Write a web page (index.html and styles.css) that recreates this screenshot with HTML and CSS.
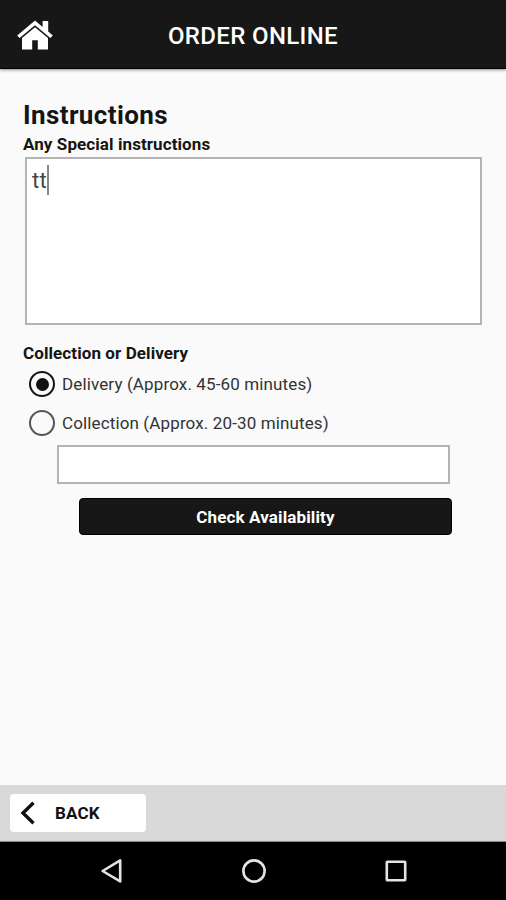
FILE: index.html
```html
<!DOCTYPE html>
<html lang="en">
<head>
<meta charset="utf-8">
<title>Order Online</title>
<link rel="stylesheet" href="styles.css">
</head>
<body>
<div class="app">
  <header class="topbar">
    <svg class="home" viewBox="0 0 38 32" width="38" height="32">
      <path d="M19 1.5L1.2 16.4l2.4 2.7L19 6.3l15.4 12.8 2.4-2.7-4.6-3.9V2h-5.6v6z"/>
      <path d="M19 8.2L6 19v11.6h10.2v-9.4h5.6v9.4H32V19z"/>
    </svg>
    <h1 class="title"><span>ORDER ONLINE</span></h1>
  </header>
  <main class="content">
    <h2 class="heading"><span>Instructions</span></h2>
    <div class="label label-any"><span>Any Special instructions</span></div>
    <div class="notes"><span>tt</span><i class="caret"></i></div>
    <div class="label label-mode"><span>Collection or Delivery</span></div>
    <div class="option"><i class="radio checked"></i><span class="opt-delivery">Delivery (Approx. 45-60 minutes)</span></div>
    <div class="option"><i class="radio"></i><span class="opt-collection">Collection (Approx. 20-30 minutes)</span></div>
    <div class="field"></div>
    <div class="check"><span>Check Availability</span></div>
  </main>
  <footer class="bottom">
    <div class="back">
      <svg width="16" height="24" viewBox="0 0 16 24"><path d="M13.5 1.8L3 12l10.5 10.2"/></svg>
      <span>BACK</span>
    </div>
  </footer>
  <nav class="system">
    <svg width="24" height="26" viewBox="0 0 24 26"><path d="M20.2 2.4v21L2.6 13z"/></svg>
    <svg width="26" height="26" viewBox="0 0 26 26"><circle cx="13" cy="13" r="10.6"/></svg>
    <svg width="24" height="26" viewBox="0 0 24 26"><rect x="2.8" y="3.8" width="18.4" height="18.4" rx=".6"/></svg>
  </nav>
</div>
</body>
</html>
```
FILE: styles.css
```css
* { box-sizing: border-box; }
body { margin: 0; font-family: Roboto, sans-serif; color: #151515; }
.app { width: 506px; height: 900px; display: flex; flex-direction: column; background: #fafafa; }
.topbar { height: 69px; flex: none; background: #171717; border-bottom: 1px solid #000; box-shadow: 0 1px 3px rgba(0,0,0,.45); display: grid; grid-template-columns: 60px 1fr 60px; align-items: center; }
.home { margin: 1px 0 0 16px; fill: #fff; }
.title { margin: 3px 0 0; text-align: center; font-size: 24px; line-height: 30px; font-weight: 500; letter-spacing: .35px; color: #fff; white-space: nowrap; }
.content { flex: 1; padding: 30px 24px 0 23px; display: flex; flex-direction: column; align-items: stretch; }
.heading { margin: 0; font-size: 26px; line-height: 32px; font-weight: 700; letter-spacing: .4px; }
.label { font-size: 17px; line-height: 22px; font-weight: 700; letter-spacing: .09px; white-space: nowrap; }
.label-any { margin-top: 2px; }
.notes { margin: 2px 0 0 2px; height: 168px; background: #fff; border: 2px solid #b4b4b4; padding: 6px 5px; display: flex; font-size: 22px; line-height: 32px; letter-spacing: .3px; color: #444; }
.caret { width: 2px; height: 30px; background: #888; }
.label-mode { margin: 17px 0 7px; }
.option { height: 39px; margin-left: 6px; display: flex; align-items: flex-start; gap: 7px; font-size: 17px; line-height: 26px; letter-spacing: .13px; color: #333; white-space: nowrap; }
.radio { width: 26px; height: 26px; flex: none; border: 2px solid #555; border-radius: 50%; display: grid; place-items: center; }
.checked { border-color: #151515; }
.checked::after { content: ""; width: 13px; height: 13px; border-radius: 50%; background: #111; }
.field { height: 39px; margin: -4px 32px 0 34px; background: #fff; border: 2px solid #b4b4b4; }
.check { height: 37px; margin: 14px 30px 0 56px; border-radius: 4px; background: #171717; border: 1px solid #000; color: #fff; display: grid; place-items: center; font-size: 17px; font-weight: 700; letter-spacing: .13px; }
.bottom { height: 57px; flex: none; background: #d9d9d9; padding: 9px 10px; border-bottom: 1px solid #888; }
.back { width: 136px; height: 38px; background: #fff; border-radius: 4px; display: flex; align-items: center; font-size: 17px; font-weight: 700; letter-spacing: .2px; color: #111; }
.back svg { margin: 0 19px 0 10px; fill: none; stroke: #111; stroke-width: 3.4; }
.system { height: 58px; flex: none; background: #000; display: flex; justify-content: space-between; padding: 16px 98px 0 100px; }
.system svg { fill: none; stroke: #e4e4e4; stroke-width: 2.6; stroke-linejoin: round; }
```
